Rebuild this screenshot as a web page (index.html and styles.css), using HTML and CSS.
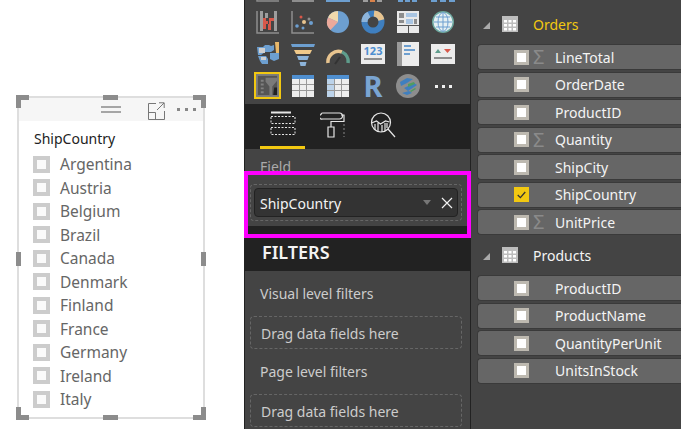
FILE: index.html
```html
<!DOCTYPE html>
<html lang="en">
<head>
    <meta charset="UTF-8">
    <title>Slicer</title>
    <link rel="stylesheet" href="styles.css">
</head>
<body>
    <!-- report canvas -->
    <div class="canvas">
        <div class="slicer">
            <span class="handle h-tl"></span><span class="handle h-tm"></span><span class="handle h-tr"></span>
            <span class="handle h-ml"></span><span class="handle h-mr"></span>
            <span class="handle h-bl"></span><span class="handle h-bm"></span><span class="handle h-br"></span>
            <div class="slicer-head">
                <svg class="grip" width="20" height="8" viewBox="0 0 20 8"><path d="M0 1h20M0 6h20" stroke="#8c8c8c" stroke-width="1.400"/></svg>
                <svg class="focus" width="18" height="18" viewBox="0 0 18 18" fill="none" stroke="#777"><path d="M9 1.500H1.500V17.500H17.500V9M1.500 10.500H8.500V17.500M10 8L17 1M12 .8h5.200V6"/></svg>
                <span class="more">
                    <i></i><i></i><i></i>
                </span>
            </div>
            <div class="slicer-title">ShipCountry</div>
            <ul class="slicer-list">
                <li><span class="tick"></span>Argentina</li>
                <li><span class="tick"></span>Austria</li>
                <li><span class="tick"></span>Belgium</li>
                <li><span class="tick"></span>Brazil</li>
                <li><span class="tick"></span>Canada</li>
                <li><span class="tick"></span>Denmark</li>
                <li><span class="tick"></span>Finland</li>
                <li><span class="tick"></span>France</li>
                <li><span class="tick"></span>Germany</li>
                <li><span class="tick"></span>Ireland</li>
                <li><span class="tick"></span>Italy</li>
            </ul>
        </div>
    </div>

    <!-- visualizations pane -->
    <div class="vis-pane">
        <div class="gallery">
            <svg viewBox="0 0 24 24"><path d="M1 1v22h22" fill="none" stroke="#8d8d8d" stroke-width="1.500"/><path d="M3 19l7-7 5 4 7-6" fill="none" stroke="#d98a4b" stroke-width="1.500"/></svg>
            <svg viewBox="0 0 24 24"><path d="M1 0h22v24H1z" fill="#8d8d8d"/><path d="M2 0h20v20L15 14 9 17 2 19z" fill="#e8c48f"/></svg>
            <svg viewBox="0 0 24 24"><path d="M0 18l5-6 5 3 5-5 5 5 4-3v12H0z" fill="#e4964c"/><path d="M0 24v-4l6-2 6 3 6-3 6 2v4z" fill="#6d9fd0"/></svg>
            <svg viewBox="0 0 24 24"><path d="M2 24V8h5v16zM9 24V4h5v20zM16 24V8h5v16z" fill="#9d9d9d"/><path d="M9 24V12h5v12z" fill="#d9824a"/></svg>
            <svg viewBox="0 0 24 24"><path d="M2 24V8h5v16zM9 24V4h5v20zM16 24V8h5v16z" fill="#6d9fd0"/><path d="M2 8h5v5H2zM9 4h5v4H9zM16 8h5v3h-5z" fill="#e4964c"/></svg>
            <svg viewBox="0 0 24 24"><path d="M0 24V6h6v18zM9 24V6h6v18zM18 24V6h6v18z" fill="#6d9fd0"/><path d="M0 6h6v5H0zM9 9h6v5H9zM18 6h6v4h-6z" fill="#e4964c"/></svg>

            <svg viewBox="0 0 24 24"><path d="M1 1v22h22" fill="none" stroke="#8d8d8d" stroke-width="1.500"/><path d="M4 1h3v20H4zM18 1h3v20h-3z" fill="#9d9d9d"/><path d="M7 8h3v6h3V8h5v3h-3v9h-3V11h-2v8H7z" fill="#d8584a"/><path d="M9 3h3v5H9z" fill="#9d9d9d"/></svg>
            <svg viewBox="0 0 24 24"><path d="M1 1v22h22" fill="none" stroke="#8d8d8d" stroke-width="1.500"/><circle cx="6" cy="16" r="1.800" fill="#6d9fd0"/><circle cx="10" cy="7" r="1.500" fill="#d8584a"/><circle cx="12" cy="18" r="1.500" fill="#6d9fd0"/><circle cx="13" cy="12" r="2" fill="#e8c48f"/><circle cx="18" cy="9" r="1.500" fill="#8d8d8d"/><circle cx="20" cy="13" r="2" fill="#6d9fd0"/></svg>
            <svg viewBox="0 0 24 24"><circle cx="12" cy="12" r="11" fill="#6d9fd0"/><path d="M12 12V1A11 11 0 0 0 2 7.500z" fill="#f0d9ac"/><path d="M12 12L2 7.500A11 11 0 0 0 4.500 20z" fill="#eba99b"/></svg>
            <svg viewBox="0 0 24 24" fill="none" stroke-width="6"><circle cx="12" cy="12" r="8.500" stroke="#3f7fbf"/><path d="M13 3.600A8.500 8.500 0 0 1 20.400 10" stroke="#e8c48f"/><path d="M3.500 12A8.500 8.500 0 0 1 8 4.500" stroke="#8db4da"/></svg>
            <svg viewBox="0 0 24 24"><path d="M1 1h22v22H1z" fill="#e9e9e9"/><path d="M3 3h5v5H3zM3 10h5v3H3z" fill="#8d8d8d"/><path d="M10 3h11v4H10zM10 9h7v5h-7z" fill="#a9c5e2"/><path d="M18 9h3v5h-3z" fill="#8d8d8d"/><path d="M1 15h22v1H1zM12 15h1v8h-1z" fill="#555"/></svg>
            <svg viewBox="0 0 24 24"><circle cx="12" cy="12" r="11" fill="#6da8a0"/><circle cx="12" cy="12" r="9.500" fill="#e6f0f2"/><path d="M12 3v18M3 12h18M5 7h14M5 17h14" stroke="#6d9fd0" fill="none"/><ellipse cx="12" cy="12" rx="5" ry="9.500" fill="none" stroke="#6d9fd0"/></svg>

            <svg viewBox="0 0 24 24"><path d="M1 5h6l2-2h4l2 1 3-1v5l-3 2H9L5 13H2zM14 11h9v6l-5 2-4-2zM2 14h8l2 3v5H6l-2-3z" fill="#6d9fd0"/><path d="M3 6h6v5H3zM5 15h5v3H5z" fill="#cfcfcf"/><path d="M19 0h4v11h-3z" fill="#e8b86a"/></svg>
            <svg viewBox="0 0 24 24"><path d="M0 2h24l-1 3H1z" fill="#6d9fd0"/><path d="M3 8h18l-2 4H5z" fill="#f0c98a"/><path d="M6 14h12l-1.500 4h-9z" fill="#8db4da"/><path d="M8.500 20h7l-1 4h-5z" fill="#8db4da"/></svg>
            <svg viewBox="0 0 24 24" fill="none" stroke-width="3.500"><path d="M2 21A10.500 10.500 0 0 1 16 10" stroke="#e8c48f"/><path d="M16 10a10.500 10.500 0 0 1 6 11" stroke="#5f9d8c"/><path d="M9 22l5-7" stroke="#333" stroke-width="2"/></svg>
            <div class="ico-card"><span class="num">123</span><i></i></div>
            <svg viewBox="0 0 24 24"><path d="M1 0h22v24H1z" fill="#ececec"/><path d="M1 0h5v24H1z" fill="#9a9a9a"/><path d="M8 3h7v2H8zM8 7h11v2H8zM8 11h6v2H8z" fill="#6d9fd0"/></svg>
            <svg viewBox="0 0 24 24"><path d="M0 2h24v20H0z" fill="#ececec"/><path d="M4 11l3-4 3 4z" fill="#5f9d8c"/><path d="M13 7h7l-3.500 4z" fill="#d8584a"/><path d="M3 15h18v2H3z" fill="#8d8d8d"/></svg>

            <div class="cell-on"><svg viewBox="0 0 24 24"><path d="M0 0h24v24H0z" fill="#7d7d7d"/><path d="M2 2h20v20H2z" fill="#555"/><path d="M5 6h3v2H5zM5 10h3v2H5zM5 14h3v2H5zM5 18h3v2H5z" fill="#808080"/><path d="M10 4h12v3l-5 6v9h-3V13L10 8z" fill="#7a7a7a"/><path d="M19 14h3v8h-4z" fill="#222"/></svg></div>
            <svg viewBox="0 0 24 24"><path d="M1 1h22v22H1z" fill="#eee"/><path d="M1 1h22v4H1z" fill="#4f8fd0"/><path d="M8 5h1v18H8zM15 5h1v18h-1zM1 10h22v1H1zM1 16h22v1H1z" fill="#999"/></svg>
            <svg viewBox="0 0 24 24"><path d="M1 1h22v22H1z" fill="#eee"/><path d="M1 1h22v4H1z" fill="#4f8fd0"/><path d="M1 5h7v18H1z" fill="#bcd3ea"/><path d="M8 5h1v18H8zM15 5h1v18h-1zM1 10h22v1H1zM1 16h22v1H1z" fill="#999"/></svg>
            <span class="ico-r">R</span>
            <svg viewBox="0 0 24 24"><circle cx="12" cy="12" r="12" fill="#8d8d8d"/><path d="M4 8l7-4 6 1-6 4-6 3zM8 14l10-5 3 2-9 6zM6 19l7-2 3 2-5 2z" fill="#3f7fbf"/><path d="M12 10l6-2 1 2-7 3zM14 17l5-3 1 1-5 3z" fill="#4f9d5f"/></svg>
            <div class="ico-dots"><i></i><i></i><i></i></div>
        </div>

        <div class="tabs">
            <div class="tab tab-on">
                <svg width="26" height="24" viewBox="0 0 26 24" fill="none" stroke="#e6e6e6"><path d="M1 1.500h20" stroke-width="2"/><path d="M1 5.500h24v7H1zM1 16.500h24v7H1z" stroke-dasharray="2 1.500"/></svg>
            </div>
            <div class="tab">
                <svg width="26" height="26" viewBox="0 0 26 26" fill="none" stroke="#e6e6e6" stroke-width="1.200"><path d="M1 2.500a1.500 1.500 0 0 1 1.500-1.500h17a1.500 1.500 0 0 1 0 6h-17A1.500 1.500 0 0 1 1 2.500zM21 3h3v6.500H11V15"/><path d="M8 15h6v10H8z"/><path d="M24 12v13" stroke-dasharray="2 2" stroke="#777"/></svg>
            </div>
            <div class="tab">
                <svg width="26" height="26" viewBox="0 0 26 26" fill="none" stroke="#e6e6e6" stroke-width="1.200"><circle cx="11" cy="10.500" r="9.500"/><path d="M1.500 11l5-2 4 3 5-3 4 1M5 12v6M8 11v8M12 13v7M15 11v8M17 11v5M18 17l7 8" /></svg>
            </div>
        </div>

        <div class="field-sec">
            <div class="sec-label">Field</div>
            <div class="well">
                <div class="chip">
                    <span class="chip-name">ShipCountry</span>
                    <span class="caret"></span>
                    <svg width="12" height="12" viewBox="0 0 12 12"><path d="M1 1l10 10M11 1L1 11" stroke="#f0f0f0" stroke-width="1.200"/></svg>
                </div>
            </div>
        </div>

        <div class="filters-head">FILTERS</div>

        <div class="filters">
            <div class="filter-label">Visual level filters</div>
            <div class="drop">Drag data fields here</div>
            <div class="filter-label">Page level filters</div>
            <div class="drop">Drag data fields here</div>
        </div>

        <div class="highlight"></div>
    </div>

    <!-- fields pane -->
    <div class="fields-pane">
        <div class="group group-on">
            <span class="arrow"></span>
            <svg class="tbl" width="16" height="16" viewBox="0 0 16 16"><path d="M0 0h16v16H0z" fill="#bdbdbd"/><path d="M2 4h3v2.500H2zM6.500 4h3v2.500h-3zM11 4h3v2.500h-3zM2 8h3v2.500H2zM6.500 8h3v2.500h-3zM11 8h3v2.500h-3zM2 12h3v2.500H2zM6.500 12h3v2.500h-3zM11 12h3v2.500h-3z" fill="#fff"/></svg>
            Orders
        </div>
        <div class="rows">
            <div class="row"><span class="box"></span><span class="sigma">Σ</span>LineTotal</div>
            <div class="row"><span class="box"></span><span class="sigma"></span>OrderDate</div>
            <div class="row"><span class="box"></span><span class="sigma"></span>ProductID</div>
            <div class="row"><span class="box"></span><span class="sigma">Σ</span>Quantity</div>
            <div class="row"><span class="box"></span><span class="sigma"></span>ShipCity</div>
            <div class="row"><span class="box box-on"><svg width="12" height="10" viewBox="0 0 12 10"><path d="M1 5l3.500 3.500L11 1" fill="none" stroke="#333" stroke-width="1.800"/></svg></span><span class="sigma"></span>ShipCountry</div>
            <div class="row"><span class="box"></span><span class="sigma">Σ</span>UnitPrice</div>
        </div>
        <div class="group">
            <span class="arrow"></span>
            <svg class="tbl" width="16" height="16" viewBox="0 0 16 16"><path d="M0 0h16v16H0z" fill="#bdbdbd"/><path d="M2 4h3v2.500H2zM6.500 4h3v2.500h-3zM11 4h3v2.500h-3zM2 8h3v2.500H2zM6.500 8h3v2.500h-3zM11 8h3v2.500h-3zM2 12h3v2.500H2zM6.500 12h3v2.500h-3zM11 12h3v2.500h-3z" fill="#fff"/></svg>
            Products
        </div>
        <div class="rows rows-second">
            <div class="row"><span class="box"></span><span class="sigma"></span>ProductID</div>
            <div class="row"><span class="box"></span><span class="sigma"></span>ProductName</div>
            <div class="row"><span class="box"></span><span class="sigma"></span>QuantityPerUnit</div>
            <div class="row"><span class="box"></span><span class="sigma"></span>UnitsInStock</div>
        </div>
    </div>
</body>
</html>
```

FILE: styles.css
```css
/* page */
body {
    display: flex;
    width: 681px;
    height: 429px;
    margin: 0;
    overflow: hidden;
    background-color: #fff;
    font-family: "Noto Sans", "Open Sans", sans-serif;
}

/* canvas with the slicer */
.canvas {
    flex: none;
    width: 244px;
    padding: 96px 39px 0 17px;
    box-sizing: border-box;
}

.slicer {
    position: relative;
    height: 323px;
    border: 2px solid #dedede;
    box-sizing: border-box;
}

.handle {
    position: absolute;
    background-color: #8c8c8c;
}

.h-tl, .h-tr, .h-bl, .h-br {
    width: 8px;
    height: 8px;
    background-color: transparent;
    border: 0 solid #8c8c8c;
}

.h-tl { left: -3px; top: -3px; border-width: 5px 0 0 5px; }
.h-tr { right: -3px; top: -3px; border-width: 5px 5px 0 0; }
.h-bl { left: -3px; bottom: -3px; border-width: 0 0 5px 5px; }
.h-br { right: -3px; bottom: -3px; border-width: 0 5px 5px 0; }
.h-tm { left: 84px; top: -3px; width: 15px; height: 5px; }
.h-bm { left: 84px; bottom: -3px; width: 15px; height: 5px; }
.h-ml { left: -3px; top: 154px; width: 5px; height: 14px; }
.h-mr { right: -3px; top: 154px; width: 5px; height: 14px; }

.slicer-head {
    display: flex;
    align-items: center;
    height: 23px;
    background-color: #f6f6f6;
}

.grip {
    margin-left: 82px;
    margin-top: 1px;
}

.focus {
    margin-left: 26px;
    margin-top: 2px;
}

.more {
    display: flex;
    gap: 5px;
    margin-left: 12px;
}

.more i {
    width: 3px;
    height: 3px;
    background-color: #888;
}

.slicer-title {
    margin: 8px 0 0 15px;
    font-size: 14px;
    line-height: 19px;
    color: #222;
}

.slicer-list {
    margin: 4.3px 0 0 14px;
    padding: 0;
    list-style: none;
    font-size: 15.5px;
    color: #666;
}

.slicer-list li {
    display: flex;
    align-items: center;
    height: 23.5px;
}

.tick {
    flex: none;
    width: 9px;
    height: 9px;
    margin-right: 10px;
    border: 4px solid #ccc;
    background-color: #fafafa;
}

/* visualizations pane */
.vis-pane {
    position: relative;
    flex: none;
    width: 226px;
    border-left: 1px solid #222;
    box-sizing: border-box;
    background-color: #444;
    color: #ddd;
}

.gallery {
    display: grid;
    grid-template-columns: repeat(6, 24px);
    grid-auto-rows: 24px;
    column-gap: 11px;
    row-gap: 8px;
    height: 104px;
    padding-left: 11px;
    padding-bottom: 6px;
    overflow: hidden;
    align-content: end;
    box-sizing: border-box;
}

.gallery svg {
    display: block;
    width: 24px;
    height: 24px;
}

.ico-card {
    display: flex;
    flex-direction: column;
    align-items: center;
    height: 20px;
    margin-top: 2px;
    background-color: #ececec;
}

.ico-card .num {
    font-size: 11px;
    font-weight: 700;
    line-height: 14px;
    color: #4f8fd0;
}

.ico-card i {
    width: 18px;
    height: 2px;
    background-color: #8d8d8d;
}

.cell-on {
    width: 27px;
    height: 27px;
    margin: -2px 0 0 -2px;
    border: 2px solid #f2c811;
    box-sizing: border-box;
}

.gallery .cell-on svg {
    width: 23px;
    height: 23px;
}

.ico-r {
    font-size: 29px;
    font-weight: 700;
    line-height: 24px;
    text-align: center;
    color: #7aa5d2;
}

.ico-dots {
    display: flex;
    gap: 4px;
    align-items: center;
    justify-content: center;
}

.ico-dots i {
    width: 3px;
    height: 3px;
    background-color: #f0f0f0;
}

.tabs {
    display: flex;
    gap: 5px;
    height: 45px;
    padding-left: 15px;
    box-sizing: border-box;
    background-color: #222;
}

.tab {
    display: flex;
    align-items: center;
    justify-content: center;
    width: 45px;
    height: 45px;
    box-sizing: border-box;
    padding-bottom: 4px;
}

.tab-on {
    border-bottom: 3px solid #f2c811;
}

.field-sec {
    height: 77px;
    padding: 8px 8px 0 5px;
    box-sizing: border-box;
}

.sec-label {
    height: 27px;
    margin-left: 10px;
    font-size: 14px;
    line-height: 20px;
    color: #aaa;
}

.well {
    height: 37px;
    padding: 3px;
    border: 1px dashed #666;
    border-radius: 4px;
    box-sizing: border-box;
}

.chip {
    display: flex;
    align-items: center;
    height: 29px;
    padding: 0 4px 0 5px;
    border: 1px solid #222;
    border-radius: 4px;
    box-sizing: border-box;
    background-color: #333;
    font-size: 14px;
    color: #f4f4f4;
}

.chip-name {
    flex: 1;
    padding-top: 1px;
}

.caret {
    width: 0;
    height: 0;
    margin-right: 10px;
    border: 4px solid transparent;
    border-top: 5px solid #777;
    border-bottom: 0;
}

.filters-head {
    height: 45px;
    padding-left: 17px;
    box-sizing: border-box;
    background-color: #222;
    font-size: 18px;
    font-weight: 600;
    line-height: 52px;
    color: #f4f4f4;
}

.filters {
    padding: 12px 8px 0 5px;
}

.filter-label {
    height: 33px;
    margin-left: 10px;
    font-size: 14px;
    line-height: 22px;
    color: #ccc;
}

.drop {
    height: 33px;
    margin-bottom: 12px;
    padding-left: 10px;
    border: 1px dashed #666;
    border-radius: 4px;
    box-sizing: border-box;
    font-size: 14px;
    line-height: 33px;
    color: #ccc;
}

/* magenta call-out drawn over the field well */
.highlight {
    position: absolute;
    left: -1px;
    top: 171px;
    width: 219px;
    height: 59px;
    border: 4px solid #ff00ff;
}

/* fields pane */
.fields-pane {
    flex: 1;
    padding-left: 6px;
    border-left: 1px solid #222;
    background-color: #444;
    color: #f4f4f4;
    font-size: 14px;
}

.group {
    display: flex;
    align-items: center;
    height: 30px;
    padding-top: 9px;
}

.group + .rows + .group {
    height: 24px;
    padding-top: 8px;
}

.group-on {
    color: #f2c811;
}

.arrow {
    width: 0;
    height: 0;
    margin: 3px 12px 0 6px;
    border-style: solid;
    border-width: 0 0 7px 7px;
    border-color: transparent transparent #aaa transparent;
}

.tbl {
    margin-right: 15px;
}

.rows {
    display: flex;
    flex-direction: column;
    gap: 1.5px;
    margin-top: 5px;
}

.rows-second {
    margin-top: 8px;
}

.row {
    display: flex;
    align-items: center;
    height: 26px;
    padding-left: 36px;
    border: 1px solid #3a3a3a;
    border-right: 0;
    border-radius: 4px 0 0 4px;
    box-sizing: border-box;
    background-color: #666;
}

.box {
    display: flex;
    align-items: center;
    justify-content: center;
    flex: none;
    width: 15px;
    height: 15px;
    border: 3px solid #bdb9b0;
    box-sizing: border-box;
    background-color: #fff;
}

.box-on {
    border-color: #f2c811;
    background-color: #f2c811;
}

.sigma {
    flex: none;
    width: 26px;
    padding-left: 4px;
    box-sizing: border-box;
    font-size: 20px;
    line-height: 1;
    color: #8a8a8a;
}
```
